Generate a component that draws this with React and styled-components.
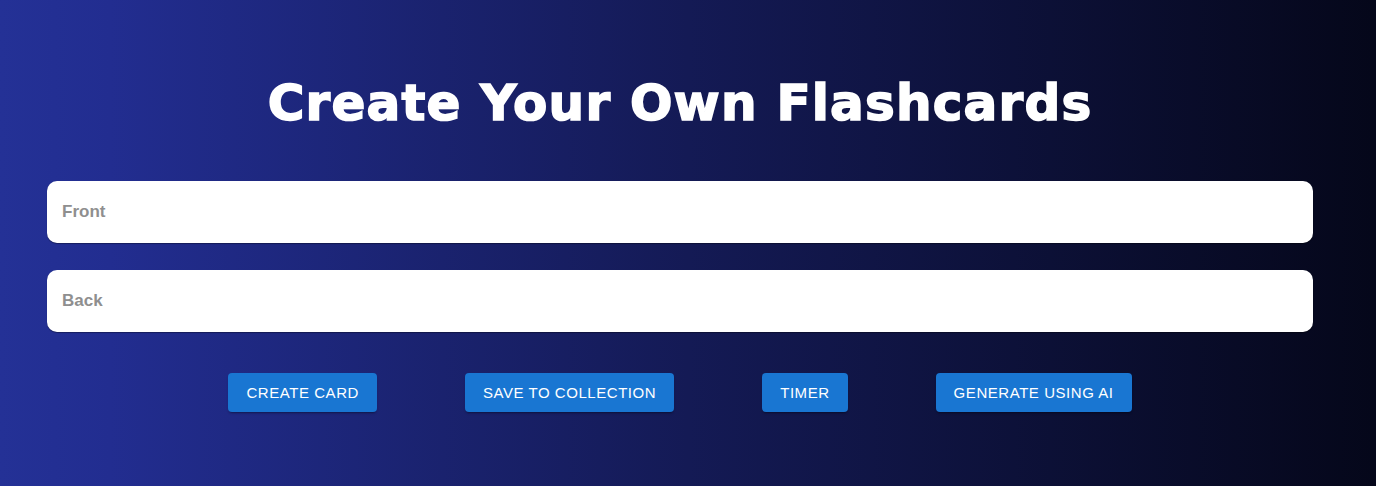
import React from 'react';
import styled, { createGlobalStyle } from 'styled-components';

const GlobalStyle = createGlobalStyle`
    html, body {
        margin: 0;
        padding: 0;
    }
    body {
        font-family: 'Liberation Sans', Arial, sans-serif;
    }
`;

export const Page = styled.div`
    min-height: 486px;
    box-sizing: border-box;
    background: linear-gradient(to right, #243196 0%, #222d90 8%, #141a55 50%, #05071a 100%);
    padding: 70px 63px 0 47px;
    display: flex;
    flex-direction: column;
    align-items: center;
`;

export const Title = styled.h1`
    margin: 0 0 45px;
    font-family: 'DejaVu Sans', sans-serif;
    font-weight: 900;
    font-size: 50px;
    line-height: 66px;
    color: #ffffff;
    letter-spacing: 1.2px;
    -webkit-text-stroke: 1.6px #ffffff;
`;

export const Form = styled.div`
    width: 100%;
    display: flex;
    flex-direction: column;
    gap: 27px;
`;

export const Field = styled.input`
    width: 100%;
    box-sizing: border-box;
    height: 62px;
    border: none;
    border-radius: 10px;
    background: #ffffff;
    box-shadow: 0 1px 1px rgba(0, 0, 0, 0.35);
    padding: 0 15px;
    font-family: 'Liberation Sans', Arial, sans-serif;
    font-size: 17px;
    font-weight: 700;
    color: #333;
    outline: none;

    &::placeholder {
        color: #8f8f8f;
    }
`;

export const Actions = styled.div`
    display: flex;
    justify-content: center;
    gap: 88px;
    margin-top: 41px;
`;

export const Button = styled.button`
    height: 39px;
    padding: 0 18px;
    border: none;
    border-radius: 4px;
    background: #1976d2;
    color: #ffffff;
    font-family: 'Liberation Sans', Arial, sans-serif;
    font-size: 15px;
    text-transform: uppercase;
    letter-spacing: 0.55px;
    box-shadow: 0 3px 1px -2px rgba(0, 0, 0, 0.2), 0 2px 2px rgba(0, 0, 0, 0.14);
    cursor: pointer;
`;

export default function App() {
    return (
        <>
            <GlobalStyle />
            <Page>
                <Title>Create Your Own Flashcards</Title>
                <Form>
                    <Field placeholder="Front" />
                    <Field placeholder="Back" />
                </Form>
                <Actions>
                    <Button>Create Card</Button>
                    <Button>Save to Collection</Button>
                    <Button>Timer</Button>
                    <Button>Generate using AI</Button>
                </Actions>
            </Page>
        </>
    );
}
